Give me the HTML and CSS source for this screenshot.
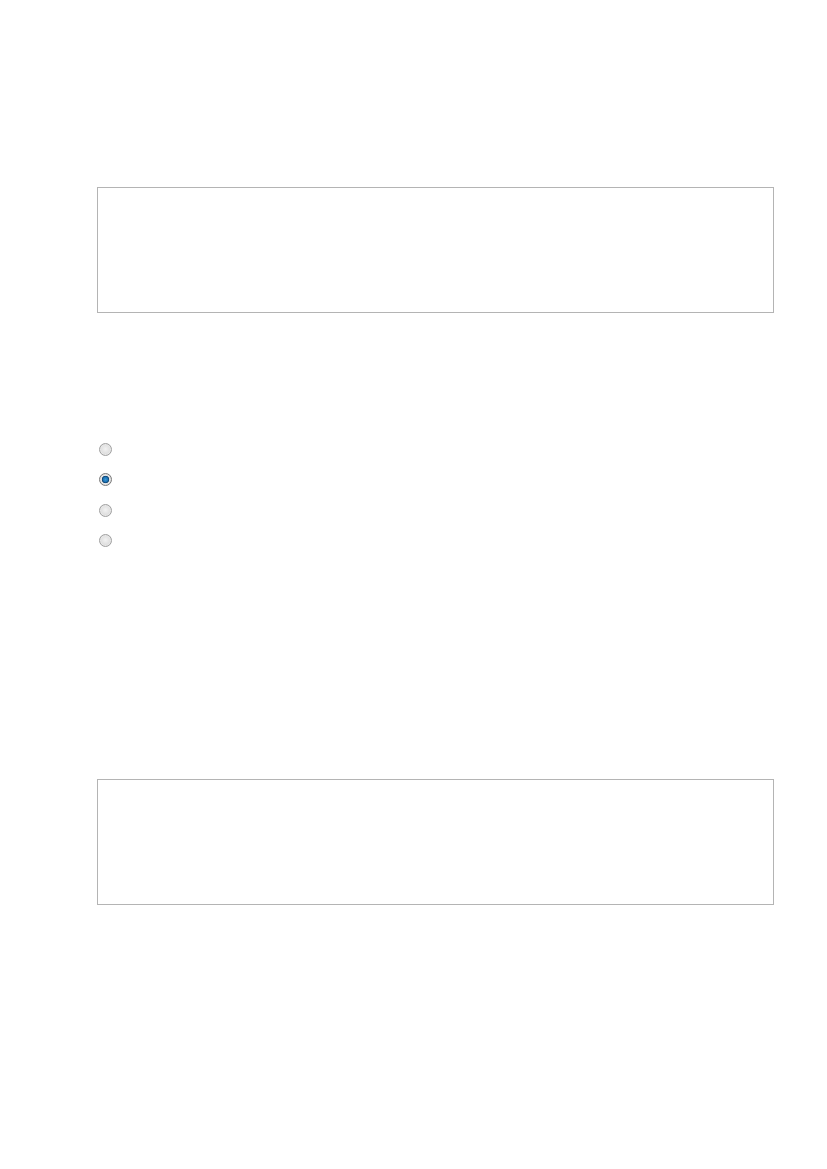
FILE: index.html
```
<!DOCTYPE html>
<html>
<head>
<meta charset="utf-8">
<link rel="stylesheet" href="styles.css">
</head>
<body>
<div class="page">
  <div class="field"></div>
  <div class="radios">
    <span class="radio"></span>
    <span class="radio checked"></span>
    <span class="radio"></span>
    <span class="radio"></span>
  </div>
  <div class="field field-2"></div>
</div>
</body>
</html>
```
FILE: styles.css
```
html, body {
  margin: 0;
  padding: 0;
  background: #ffffff;
  font-family: "Liberation Sans", Arial, sans-serif;
  overflow: hidden;
}
.page {
  width: 827px;
  box-sizing: border-box;
  padding: 187px 53px 0 97px;
  display: flex;
  flex-direction: column;
}
.field {
  height: 126px;
  box-sizing: border-box;
  border: 1px solid #b4b4b4;
  background: #ffffff;
}
.radios {
  margin-top: 130px;
  padding-left: 2px;
  display: flex;
  flex-direction: column;
  gap: 17.4px;
}
.radio {
  display: block;
  width: 13px;
  height: 13px;
  box-sizing: border-box;
  border-radius: 50%;
  border: 1px solid #a0a0a0;
  box-shadow: inset 0 0 0 1px #e8e8e8;
  background: radial-gradient(circle at 50% 45%, #f2f2f2 0%, #e0e0e0 55%, #cfcfcf 100%);
}
.radio.checked {
  border-color: #7a7a7a;
  box-shadow: none;
  background: radial-gradient(circle, #3d9ad6 0%, #1b72b4 30%, #0d3f6c 44%, #e6e6e6 52%, #d0d0d0 100%);
}
.field-2 {
  margin-top: 232px;
}
```
